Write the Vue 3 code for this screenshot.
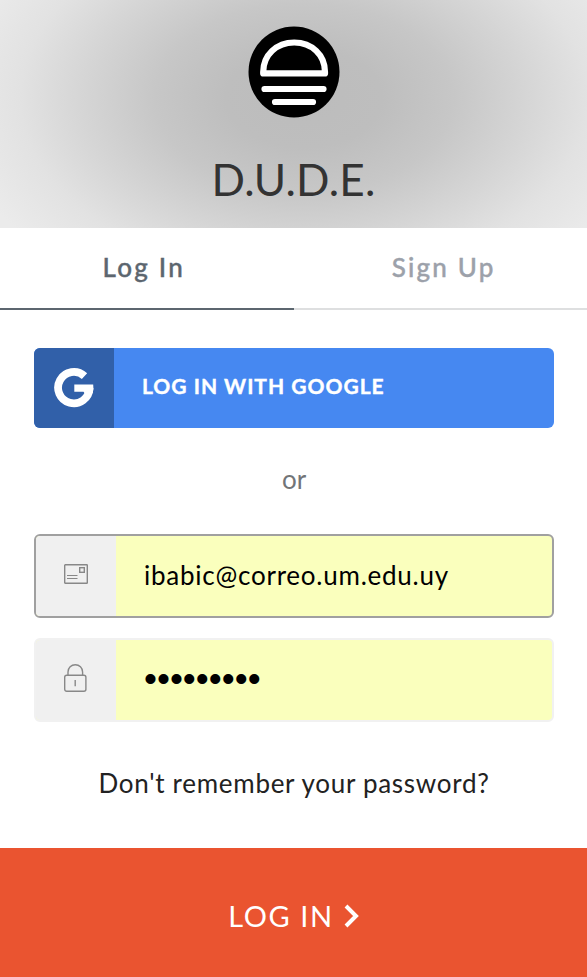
<script setup>
import { ref } from 'vue'

const tab = ref('login')
const email = ref('ibabic@correo.um.edu.uy')
const mask = '•'.repeat(9)
</script>

<template>
  <main class="lock">
    <header class="header">
      <svg class="logo" viewBox="0 0 92 92">
        <circle cx="46" cy="46" r="45.5" fill="#000" />
        <g fill="none" stroke="#fff" stroke-width="6.2" stroke-linejoin="round" stroke-linecap="round">
          <path d="M15.2 47.4v-1.400C15.2 29 28.5 16.5 46.2 16.5S77 29 77 46v1.400Z" />
          <path d="M16.500 63H75.500M27 76H65" />
        </g>
      </svg>
      <h1 class="title">D.U.D.E.</h1>
    </header>

    <nav class="tabs">
      <a class="tab tab-login" :class="{ active: tab === 'login' }" @click="tab = 'login'">Log In</a>
      <a class="tab tab-signup" :class="{ active: tab === 'signup' }" @click="tab = 'signup'">Sign Up</a>
    </nav>

    <section class="content">
      <button class="google">
        <span class="google-icon">
          <svg width="40" height="40" viewBox="0 0 40 40">
            <path d="M30.500 8.200A15.700 15.700 0 1 0 35.500 20" fill="none" stroke="#fff" stroke-width="7.800" />
            <path d="M20.300 16.400H39.200Q39.900 20.500 38.700 25L32 27L29.500 23.800H20.300Z" fill="#fff" />
          </svg>
        </span>
        <span class="google-text">LOG IN WITH GOOGLE</span>
      </button>

      <p class="or">or</p>

      <div class="field focused">
        <span class="field-icon">
          <svg width="24" height="20" viewBox="0 0 24 20" fill="none" stroke="#888">
            <rect x=".7" y=".7" width="22.600" height="18.600" rx=".6" stroke-width="1.400" />
            <rect x="15.700" y="3.700" width="4.600" height="4.600" stroke-width="1.400" />
            <path d="M3 11.500H13.500M3 14.500H13.500" stroke-width="1.200" />
          </svg>
        </span>
        <span class="value email">{{ email }}</span>
      </div>

      <div class="field">
        <span class="field-icon">
          <svg width="24" height="28" viewBox="0 0 24 28" fill="none" stroke="#888" stroke-width="1.400">
            <rect x=".7" y="11.300" width="21.200" height="16" rx="2" />
            <path d="M4 11V8a7.300 7.300 0 0 1 14.600 0v3M11.200 16v6.300" />
          </svg>
        </span>
        <span class="value password">{{ mask }}</span>
      </div>

      <p class="forgot"><a>Don't remember your password?</a></p>
    </section>

    <button class="submit">
      <span class="submit-text">LOG IN</span>
      <svg width="15" height="24" viewBox="0 0 15 24">
        <path d="M2 2L12 12L2 22" fill="none" stroke="#fff" stroke-width="4" />
      </svg>
    </button>
  </main>
</template>

<style>
body {
  margin: 0;
  background: #fff;
}
</style>

<style scoped>
.lock {
  width: 587px;
  height: 977px;
  display: flex;
  flex-direction: column;
  overflow: hidden;
  background: #fff;
  font-family: Lato, "Open Sans", sans-serif;
  white-space: nowrap;
}

button {
  margin: 0;
  padding: 0;
  border: 0;
  font-family: inherit;
  color: #fff;
}

.header {
  height: 228px;
  flex: none;
  box-sizing: border-box;
  padding-top: 26px;
  display: flex;
  flex-direction: column;
  align-items: center;
  background: radial-gradient(ellipse 355px 225px at 304px 98px, #bcbcbc 0%, #bebebe 22%, #c7c7c7 42%, #d5d5d5 62%, #e2e2e2 80%, #ebebeb 100%);
}

.logo {
  width: 92px;
  height: 92px;
}

.title {
  margin: 34px 0 0;
  font-size: 44px;
  line-height: 54px;
  font-weight: 400;
  letter-spacing: 0.200px;
  color: #333;
}

.tabs {
  height: 82px;
  flex: none;
  display: grid;
  grid-template-columns: 1fr 1fr;
}

.tab {
  box-sizing: border-box;
  border-bottom: 2px solid #dedfe0;
  text-align: center;
  font-size: 26px;
  line-height: 78px;
  font-weight: 500;
  letter-spacing: 2.200px;
  -webkit-text-stroke: 0.400px currentColor;
  color: #9ca1aa;
}

.tab-login {
  padding-right: 6px;
}

.tab-signup {
  padding-left: 7px;
}

.tab.active {
  border-color: #5c666f;
  color: #5c666f;
}

.content {
  height: 538px;
  flex: none;
  box-sizing: border-box;
  padding: 38px 33px 0 34px;
}

.google {
  width: 100%;
  height: 80px;
  display: flex;
  align-items: center;
  overflow: hidden;
  border-radius: 6px;
  background: #4688f1;
}

.google-icon {
  width: 80px;
  height: 80px;
  display: flex;
  align-items: center;
  justify-content: center;
  background: #3160a9;
}

.google-text {
  margin-left: 28px;
  padding-bottom: 5px;
  font-size: 21px;
  font-weight: 700;
  letter-spacing: 1px;
  -webkit-text-stroke: 0.400px #fff;
}

.or {
  margin: 0;
  height: 106px;
  line-height: 102px;
  text-align: center;
  font-size: 26px;
  color: #727578;
}

.field {
  height: 84px;
  box-sizing: border-box;
  margin-bottom: 20px;
  display: flex;
  overflow: hidden;
  border: 2px solid #f1f1f1;
  border-radius: 6px;
  background: #faffbd;
}

.focused {
  border-color: #a0a0a0;
}

.field-icon {
  width: 80px;
  flex: none;
  box-sizing: border-box;
  padding-bottom: 4px;
  display: flex;
  align-items: center;
  justify-content: center;
  background: #f0f0f0;
}

.value {
  padding-left: 28px;
  line-height: 78px;
  color: #000;
}

.email {
  font-size: 26px;
  letter-spacing: 0.760px;
}

.password {
  font-family: "Liberation Sans", sans-serif;
  font-size: 37px;
}

.forgot {
  margin: 0;
  line-height: 82px;
  text-align: center;
  font-size: 26px;
  letter-spacing: 0.720px;
  color: #222;
}

.submit {
  flex: 1;
  display: flex;
  align-items: center;
  justify-content: center;
  gap: 10px;
  padding-top: 6px;
  background: #ea5430;
}

.submit-text {
  font-size: 29px;
  letter-spacing: 1.600px;
}
</style>
